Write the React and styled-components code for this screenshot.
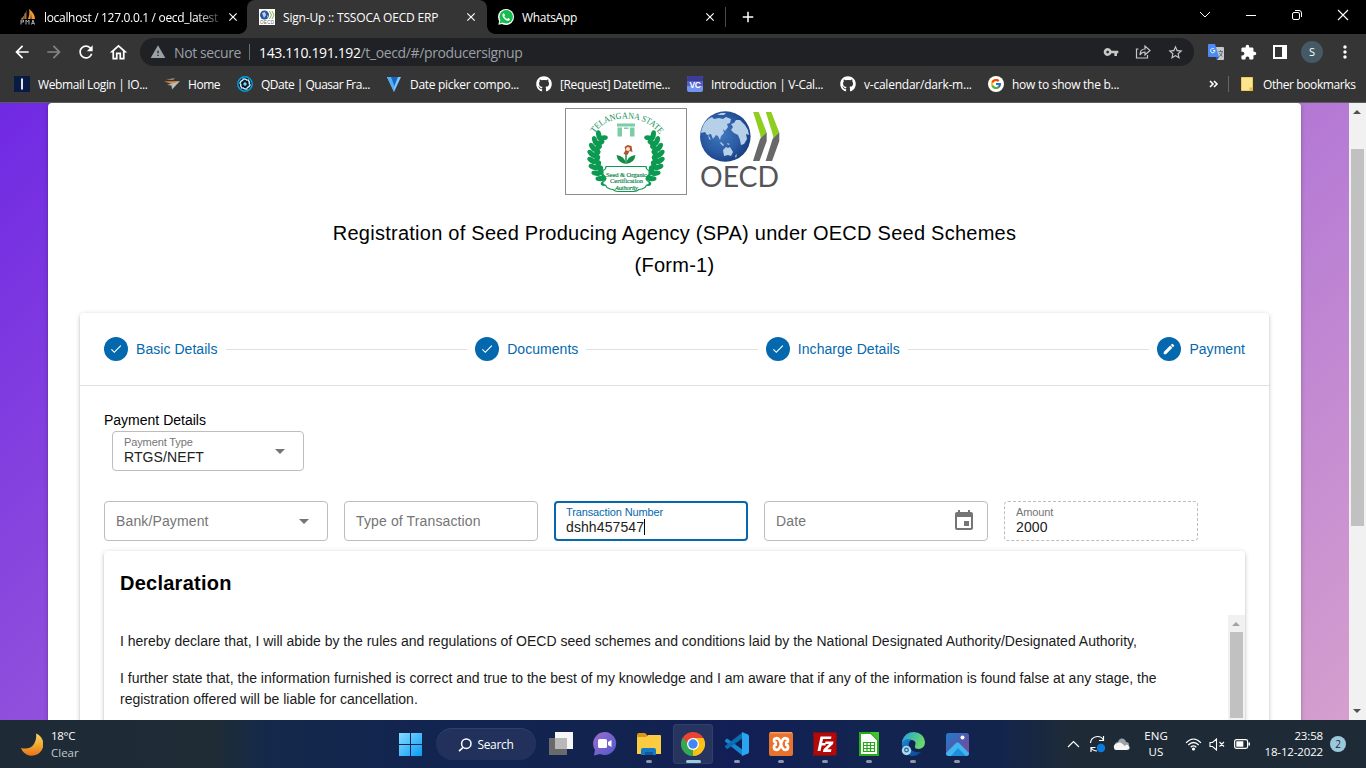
import React from "react";
import styled, { createGlobalStyle } from "styled-components";
import {
  MdArrowBack, MdArrowForward, MdRefresh, MdOutlineHome, MdWarning, MdVpnKey, MdStarBorder,
  MdExtension, MdMoreVert, MdCheck, MdEdit, MdArrowDropDown, MdEvent, MdClose, MdAdd,
} from "react-icons/md";
import { FaGithub } from "react-icons/fa";
import { FcGoogle } from "react-icons/fc";

const ui = '"Open Sans", "Noto Sans", sans-serif';
const body = '"Liberation Sans", Arial, sans-serif';
const blue = "#0468ae";

const Global = createGlobalStyle`
  * { box-sizing: border-box; }
  body { margin: 0; overflow: hidden; background: #000; font-family: ${body}; }
  svg { display: block; flex: none; }
`;

const Screen = styled.div`
  width: 1366px;
  height: 768px;
  display: flex;
  flex-direction: column;
  overflow: hidden;
`;

/* ---------- browser chrome ---------- */
const TabStrip = styled.div`
  height: 34px;
  flex: none;
  display: flex;
  background: #000;
  color: #fff;
  font: 12px ${ui};
`;
const Tab = styled.div`
  position: relative;
  width: ${(p) => p.$width}px;
  height: 34px;
  padding: 0 ${(p) => p.$right ?? 9}px 0 ${(p) => p.$left}px;
  display: flex;
  align-items: center;
  gap: 8px;
  background: ${(p) => (p.$active ? "#353535" : "transparent")};
  border-radius: 8px 8px 0 0;
  &::before, &::after {
    content: ${(p) => (p.$active ? '""' : "none")};
    position: absolute;
    bottom: 0;
    width: 8px;
    height: 8px;
  }
  &::before { left: -8px; background: radial-gradient(circle at 0 0, transparent 7.5px, #353535 8px); }
  &::after { right: -8px; background: radial-gradient(circle at 100% 0, transparent 7.5px, #353535 8px); }
`;
const TabTitle = styled.span`
  flex: 1;
  white-space: nowrap;
  letter-spacing: ${(p) => p.$spacing}px;
  ${(p) => p.$fade && "mask-image: linear-gradient(90deg, #000 88%, rgba(0,0,0,.25));"}
`;
const TabDivider = styled.i`
  width: 1px;
  height: 20px;
  margin: 7px 13px 0 0;
  background: #4a4a4a;
`;
const NewTab = styled.div`
  padding-top: 8px;
`;
const WindowButtons = styled.div`
  margin-left: auto;
  padding-right: 17px;
  height: 29px;
  display: flex;
  align-items: center;
  gap: 34px;
`;
const Toolbar = styled.div`
  height: 36px;
  flex: none;
  display: flex;
  align-items: center;
  background: #353535;
  color: #fff;
`;
const NavButtons = styled.div`
  width: 140px;
  padding-left: 12px;
  display: flex;
  gap: 12px;
`;
const Omnibox = styled.div`
  width: 1054px;
  height: 28px;
  padding: 0 10px;
  display: flex;
  align-items: center;
  border-radius: 14px;
  background: #202124;
  color: #9aa0a6;
  font: 14px ${ui};
`;
const NotSecure = styled.span`
  width: 75px;
  margin-left: 8px;
  white-space: nowrap;
  letter-spacing: -0.4px;
`;
const Bar = styled.i`
  width: 1px;
  height: 16px;
  margin-right: 9px;
  background: #6c6f73;
`;
const Url = styled.span`
  flex: 1;
  white-space: nowrap;
  letter-spacing: -0.37px;
  b { font-weight: 400; color: #fff; }
`;
const OmniActions = styled.div`
  display: flex;
  gap: 16px;
  color: #c7c7c7;
`;
const ToolActions = styled.div`
  display: flex;
  align-items: center;
  gap: 16px;
  padding-left: 14px;
`;
const Avatar = styled.div`
  width: 22px;
  height: 22px;
  margin: 0 -4px 0 -2px;
  border-radius: 50%;
  background: #455a64;
  color: #fff;
  font: 11px/21px ${ui};
  text-align: center;
`;
const Bookmarks = styled.div`
  height: 33px;
  flex: none;
  padding: 0 0 4px 14px;
  display: flex;
  align-items: center;
  background: #353535;
  border-bottom: 1px solid #5b5b5b;
  color: #fff;
  font: 12px ${ui};
`;
const Bookmark = styled.div`
  width: ${(p) => p.$width}px;
  flex: none;
  display: flex;
  align-items: center;
  gap: 8px;
  white-space: nowrap;
  letter-spacing: ${(p) => p.$spacing}px;
`;
const Overflow = styled.div`
  margin-left: auto;
  display: flex;
  align-items: center;
`;
const OverflowDivider = styled.i`
  width: 1px;
  height: 16px;
  margin: 0 12px 0 9px;
  background: #666;
`;
const OtherBookmarks = styled.span`
  width: 103px;
  margin-left: 10px;
  white-space: nowrap;
  letter-spacing: -0.4px;
`;

/* ---------- page ---------- */
const Viewport = styled.div`
  height: 617px;
  flex: none;
  display: flex;
  overflow: hidden;
`;
const Page = styled.main`
  width: 1349px;
  padding: 0 48px;
  background: linear-gradient(135deg, #7029e3, #d59fce);
`;
const Sheet = styled.section`
  height: 640px;
  padding: 5px 32px 0;
  background: #fff;
  border-radius: 4px 4px 0 0;
  box-shadow: 0 1px 5px rgba(0,0,0,.2), 0 2px 2px rgba(0,0,0,.14), 0 3px 1px -2px rgba(0,0,0,.12);
`;
const Logos = styled.div`
  height: 87px;
  padding-left: 485px;
  display: flex;
  gap: 13px;
`;
const Title = styled.h1`
  margin: 22px 0 32px;
  font: 400 20px/32px ${body};
  letter-spacing: 0.25px;
  text-align: center;
  color: #000;
`;
const Card = styled.div`
  background: #fff;
  border-radius: 4px;
  box-shadow: 0 1px 5px rgba(0,0,0,.2), 0 2px 2px rgba(0,0,0,.14), 0 3px 1px -2px rgba(0,0,0,.12);
`;
const Stepper = styled(Card)`
  height: 480px;
`;
const StepHeader = styled.div`
  height: 73px;
  padding: 0 24px;
  display: flex;
  align-items: center;
  gap: 8px;
  border-bottom: 1px solid #e0e0e0;
  color: ${blue};
  font-size: 14px;
  letter-spacing: 0.05px;
  white-space: nowrap;
`;
const Dot = styled.span`
  width: 24px;
  height: 24px;
  flex: none;
  display: grid;
  place-items: center;
  border-radius: 50%;
  background: ${blue};
  color: #fff;
`;
const StepLine = styled.i`
  flex: ${(p) => p.$grow} 1 0;
  height: 1px;
  background: #e0e0e0;
`;
const StepBody = styled.div`
  padding: 24px 24px 0;
`;
const Caption = styled.div`
  height: 21px;
  font-size: 14px;
  line-height: 21px;
`;
const Field = styled.div`
  width: ${(p) => p.$width}px;
  height: 40px;
  padding: 0 11px;
  display: flex;
  align-items: center;
  justify-content: space-between;
  border: ${(p) => (p.$focus ? `2px solid ${blue}` : `1px ${p.$readonly ? "dashed" : "solid"} #bdbdbd`)};
  ${(p) => p.$focus && "padding: 0 10px;"}
  border-radius: 4px;
  color: #757575;
  font-size: 14px;
  letter-spacing: 0.13px;
`;
const FieldText = styled.div`
  display: flex;
  flex-direction: column;
  small {
    font-size: 11px;
    line-height: 13px;
    letter-spacing: -0.12px;
    color: ${(p) => (p.$focus ? blue : "#757575")};
  }
  span { line-height: 17px; color: #212121; letter-spacing: 0.1px; }
`;
const Caret = styled.i`
  display: inline-block;
  width: 1px;
  height: 16px;
  vertical-align: -3px;
  background: #000;
`;
const TypeRow = styled.div`
  padding: 0 8px;
  height: 70px;
`;
const FieldRow = styled.div`
  display: flex;
  gap: 16px;
  margin-bottom: 10px;
`;
const Declaration = styled(Card)`
  height: 220px;
`;
const DeclTitle = styled.h2`
  margin: 0;
  height: 64px;
  padding: 16px;
  font: 700 20px/32px ${body};
  letter-spacing: 0.25px;
`;
const DeclScroll = styled.div`
  display: flex;
  justify-content: space-between;
  height: 105px;
`;
const DeclText = styled.div`
  width: 1090px;
  padding: 16px 0 0 16px;
  color: #1a1a1a;
  font-size: 14px;
  line-height: 21px;
  p { margin: 0 0 16px; }
`;
const ScrollTrack = styled.div`
  width: 17px;
  padding-top: ${(p) => p.$top}px;
  position: relative;
  background: #f1f1f1;
`;
const Thumb = styled.div`
  width: 13px;
  height: ${(p) => p.$height}px;
  margin: 0 2px;
  background: #c1c1c1;
`;
const ScrollArrow = styled.i`
  position: absolute;
  left: 4px;
  ${(p) => (p.$down ? "bottom: 7px" : "top: 7px")};
  border: 4px solid transparent;
  border-${(p) => (p.$down ? "top" : "bottom")}-color: ${(p) => p.$color};
  border-${(p) => (p.$down ? "bottom" : "top")}-width: 0;
`;

/* ---------- taskbar ---------- */
const Taskbar = styled.footer`
  height: 48px;
  flex: none;
  display: flex;
  align-items: center;
  background: linear-gradient(90deg, #1e2b37 0, #1f2c36 215px, #14294a 265px, #122450 420px, #12234f 620px, #121f56 730px, #122450 860px, #12244c 1000px, #1e2b37 1070px);
  color: #fff;
  font: 12px/16px ${ui};
`;
const Weather = styled.div`
  width: 376px;
  padding-left: 20px;
  display: flex;
  align-items: center;
  gap: 8px;
  font-size: 11.5px;
`;
const WeatherLine = styled.div`
  padding-top: 1px;
  letter-spacing: ${(p) => (p.$dim ? 0 : -0.3)}px;
  color: ${(p) => (p.$dim ? "#c3c9cf" : "#fff")};
`;
const WinButton = styled.div`
  width: 60px;
  padding-left: 23px;
`;
const SearchPill = styled.div`
  width: 100px;
  height: 32px;
  margin-right: 3px;
  padding-top: 1px;
  display: flex;
  align-items: center;
  justify-content: center;
  gap: 5px;
  border-radius: 16px;
  background: #22315b;
  box-shadow: inset 0 1px #30406a;
  letter-spacing: -0.3px;
`;
const TaskApp = styled.div`
  position: relative;
  width: 44px;
  height: 48px;
  display: grid;
  place-items: center;
  &::before {
    content: ${(p) => (p.$active ? '""' : "none")};
    position: absolute;
    inset: 4px 2px 4px 2px;
    border-radius: 4px;
    background: #27345f;
    box-shadow: inset 0 0 0 1px #323f67;
  }
  &::after {
    content: ${(p) => (p.$running ? '""' : "none")};
    position: absolute;
    bottom: 5px;
    width: ${(p) => (p.$active ? 15 : 6)}px;
    height: 3px;
    border-radius: 2px;
    background: ${(p) => (p.$active ? "#9ccadd" : "#9094ab")};
  }
  svg { position: relative; }
`;
const Tray = styled.div`
  margin-left: auto;
  padding-right: 20px;
  display: flex;
  align-items: center;
`;
const TrayIcon = styled.span`
  margin-right: ${(p) => p.$gap}px;
`;
const TrayText = styled.div`
  width: ${(p) => p.$width}px;
  margin-right: ${(p) => p.$gap}px;
  text-align: ${(p) => p.$align};
  font-size: 11.5px;
  letter-spacing: ${(p) => p.$spacing}px;
  white-space: nowrap;
`;
const Badge = styled.span`
  width: 16px;
  height: 16px;
  border-radius: 50%;
  background: #9cc8dc;
  color: #1b2a35;
  font: 10px/16px ${ui};
  text-align: center;
`;

/* ---------- drawings ---------- */
const Svg = ({ w = 16, h = w, children }) => (
  <svg width={w} height={h} viewBox={`0 0 ${w} ${h}`} fill="none">{children}</svg>
);

const PmaIcon = () => (
  <Svg>
    <path d="M6.500 1c-1 4-3 7-6 9h6z" fill="#a9743a" />
    <path d="M9 0c4 3 6 6 6 10H8c1-3 2-6 1-10z" fill="#f39a2d" />
    <path d="M5 3v7H3zM11 4l1 6h-2z" fill="#7d5a35" />
    <path d="M1 15.500V11h2.500v2H1m5 2.500V11l1.500 2L9 11v4.500m2.500 0L13 11l1.500 4.500m-2.500-1h2" stroke="#a5a8af" />
  </Svg>
);
const OecdLogo = () => (
  <svg width="80" height="87" viewBox="0 0 80 87">
    <defs>
      <radialGradient id="globe" cx=".42" cy=".45" r=".62">
        <stop offset="0" stopColor="#3f78bd" />
        <stop offset=".6" stopColor="#2a5aa3" />
        <stop offset="1" stopColor="#173b7d" />
      </radialGradient>
    </defs>
    <circle cx="25.300" cy="28.500" r="25.300" fill="url(#globe)" />
    <g fill="#b7d0ea">
      <path d="M1.500 22Q4 12 12 9l2 2 5-1 4 1 3-2 5 2-1 4-3 1 1 3-3 4-2-2 1 4-3 3-1 4-2-4-2-1-3 4-2-5-4 1-2-3-4 1z" />
      <path d="m36 12 4 0q5 4 8 10l1 5-3-1 1 5-3 5-3 1-1-5-2-5-4-2-3-3 2-3-2-3 3-1z" />
      <path d="m21 34 3 3-1 1-3-3zM27 35l3 1-2 1zM23 42l3-3 2 1 2-1 3 5-2 4-3-1-4 1zM35 48l2-2-1 4zM8 26l3 6-2-1zM17 7l4-2 5 0-2 2z" />
    </g>
    <path d="M53.200 4h5.500l8 20.500-5.200 9.500-1.500-8zM65.800 4h5.500l8 20.500-5.200 9.500-1.500-8z" fill="#8fce1e" />
    <path d="M66.700 24.500v8.500L59.500 53h-6.500l7-22zM79.300 24.500v8.500L72.100 53h-6.500l7-22z" fill="#68686a" />
    <text x="0" y="79" fontFamily="Lato" fontSize="28.500" fill="#545458" textLength="79" lengthAdjust="spacingAndGlyphs">OECD</text>
  </svg>
);
const OecdFavicon = () => (
  <Svg>
    <path fill="#fff" d="M0 0h16v16H0z" />
    <circle cx="5.500" cy="6" r="4.500" fill="#2b559b" />
    <path d="m3 4 3-1 1 3-2 3zm5 2 1 1-1 2z" fill="#bcd3ee" />
    <path d="m10.500 2 2 4-2 4m2.500-8 2 4-2 4" stroke="#84b84a" />
    <text x="1" y="15" fontSize="4.500" fontFamily="Liberation Sans" fill="#666" textLength="14">OECD</text>
  </Svg>
);
const leaves = Array.from({ length: 9 }, (_, i) => {
  const a = ((122 + i * 11.5) * Math.PI) / 180;
  return { x: 61 + 32 * Math.cos(a), y: 48 + 31 * Math.sin(a), d: (a * 180) / Math.PI };
});
const Laurel = () => (
  <g fill="#0c9a52">
    {leaves.map(({ x, y, d }) => (
      <g key={d} transform={`translate(${x} ${y}) rotate(${d})`}>
        <ellipse cx="3.500" cy="0" rx="5" ry="2.600" transform="rotate(45)" />
        <ellipse cx="-3.500" cy="0" rx="5" ry="2.600" transform="rotate(-45)" />
      </g>
    ))}
  </g>
);
const StateEmblem = () => (
  <svg width="122" height="87" viewBox="0 0 122 87">
    <rect x=".5" y=".5" width="121" height="86" fill="#fff" stroke="#8c8c8c" />
    <path id="arch" d="M29.500 25.500Q40 10.500 61 10.500T94 25.500" fill="none" />
    <text fontFamily="Liberation Serif" fontSize="9" fill="#138f59">
      <textPath href="#arch" textLength="75" lengthAdjust="spacingAndGlyphs">TELANGANA STATE</textPath>
    </text>
    <Laurel />
    <g transform="translate(122 0) scale(-1 1)"><Laurel /></g>
    <path d="M52 15.500h18v3H52zM52.500 19.500H57v9h-4.500zm12.500 0h4.500v9H65zM59 19.500h4.500V21H59z" fill="#7bcda8" />
    <path d="M61 55V43" stroke="#16904e" strokeWidth="1.500" />
    <path d="M61 56q-1-8-9.500-9 1 8 9.500 9zm0 0q1-8 9.500-9-1 8-9.500 9z" fill="#138c45" />
    <path d="m58.500 46 2-4-1-3 3-2 4 1 1 6-3-1-2 4z" fill="#b3532d" />
    <circle cx="63" cy="41" r="2" fill="#f6e2d6" />
    <path d="M41 58.500h40q0 3 3 4v4q-3 2-3 4t3 3v3q-3 0-4 3-3 2-6 2-2 2-5 2H53q-3 0-5-2-3 0-6-2-1-3-4-3v-3q3-1 3-3t-3-4v-4q3-1 3-4z" fill="#fff" stroke="#0c9a52" strokeWidth="1.100" />
    <g fontFamily="Liberation Serif" fontSize="6.500" fill="#158a50" textAnchor="middle" stroke="#158a50" strokeWidth=".2">
      <text x="61.500" y="68.500" textLength="41">Seed &amp; Organic</text>
      <text x="61.500" y="75" textLength="33">Certification</text>
      <text x="61.500" y="81.500" textLength="23" fontStyle="italic">Authority</text>
    </g>
  </svg>
);
const ShareIcon = () => (
  <Svg><path d="M3.500 5H1.500v9h11v-3M5 11c0-4 2-6 5-6V2l5 4.500L10 11V8c-2 0-4 1-5 3z" stroke="#c7c7c7" strokeWidth="1.200" /></Svg>
);
const TranslateIcon = () => (
  <Svg>
    <path d="M6 3h9q1 0 1 1v11q0 1-1 1H9z" fill="#c6c8ca" />
    <path d="M0 1q0-1 1-1h6l4 13H1q-1 0-1-1z" fill="#4c8bf5" />
    <path d="m8 13 3 0-2 3z" fill="#1a56c4" />
    <path d="M7 6.500A2.200 2.200 0 1 1 6.300 5M5 6.600h2" stroke="#fff" />
    <path d="M10.500 7.500H15M12.500 6v1.500m-1.500 5q3-1 3.300-5m-3 1.500 3 3.500" stroke="#58707c" strokeWidth=".9" />
  </Svg>
);
const QuasarIcon = () => (
  <Svg>
    <circle cx="8" cy="8" r="7.200" fill="#071b2a" stroke="#00a4e8" strokeWidth="1.400" />
    {[0, 60, 120, 180, 240, 300].map((a) => (
      <path key={a} d="M5.500 3.300Q8.500 2.500 10.500 4.500" stroke="#cfeefc" strokeWidth="1.500" transform={`rotate(${a} 8 8)`} />
    ))}
    <circle cx="8" cy="8" r="1.700" fill="#7fd4f7" />
  </Svg>
);
const HomePlane = () => (
  <Svg>
    <path d="m2 3.500 9-1.500-2 2z" fill="#9a8f85" /><path d="M0 5.500 16 5l-8 3z" fill="#e28a35" /><path d="m3 9 13-4-8 8.500-.5-4z" fill="#b9bcc0" />
  </Svg>
);
const VuetifyIcon = () => (
  <Svg><path d="M1 1h4l3 8v7zM11 1h4L8 16V9z" fill="#7bc6ff" /><path d="M4 1h8L8 11z" fill="#1867c0" /><path d="M1 1h4l3 8v7z" fill="#4fb0f7" /></Svg>
);
const VcIcon = () => (
  <Svg>
    <rect width="16" height="16" rx="2" fill="#7394f0" /><path d="M0 2q0-2 2-2h12q2 0 2 2v3H0z" fill="#3d3c99" /><path d="M0 5h16v5H0z" fill="#5360c9" />
    <text x="8" y="12" fontSize="8.500" fontWeight="700" fontFamily="Liberation Sans" textAnchor="middle" fill="#fff">VC</text>
  </Svg>
);
const WebmailIcon = () => (<Svg><path d="M0 0h16v16H0z" fill="#081b43" /><path d="M8 2.500v11" stroke="#dfe5f2" strokeWidth="2" /></Svg>);
const FolderMark = () => (<Svg w={12} h={14}><path d="M.5.5h11v13H.500z" fill="#ffe48f" stroke="#eecb55" /><path d="M8.500 10.500h3v3h-3z" fill="#e5b93c" /></Svg>);
const PanelIcon = () => (<Svg w={14}><path d="M1 1h12v12H1z" stroke="#fff" strokeWidth="2" /><path d="M9 0h5v14H9z" fill="#fff" /></Svg>);
const WhatsIcon = () => (
  <Svg><circle cx="8" cy="8" r="8" fill="#fff" /><path d="m.3 15.700 1.200-5 4 4z" fill="#fff" /><circle cx="8.200" cy="7.800" r="6.800" fill="#16bd4d" /><path d="m1.500 14.500.8-3.500 2.500 2.500z" fill="#16bd4d" /><path d="M4.800 4.700q1-1 1.700.2l.6 1.300-.8 1q1 2 2.800 2.700l1-.9 1.700.9q.5 1-.8 1.700-1.600.8-4.300-1.400-3.200-3-1.900-5.500z" fill="#fff" /></Svg>
);

const Moon = () => (
  <Svg w={23} h={23}>
    <defs><linearGradient id="moon" x1="0" y1="0" x2="0" y2="1"><stop stopColor="#f8d56a" /><stop offset=".5" stopColor="#f2ab31" /><stop offset="1" stopColor="#e9711c" /></linearGradient></defs>
    <path d="M16 0.500a11.500 11.500 0 1 1-15 14.500Q10 17 14 11q3-5 2-10.500z" fill="url(#moon)" />
  </Svg>
);
const WinLogo = () => (
  <Svg w={23}>
    <defs><linearGradient id="win" x1="0" y1="0" x2="1" y2="1"><stop stopColor="#86dcff" /><stop offset="1" stopColor="#0a9bf5" /></linearGradient></defs>
    <path d="M0 0h11v11H0zM12 0h11v11H12zM0 12h11v11H0zM12 12h11v11H12z" fill="url(#win)" />
  </Svg>
);
const TaskViewIcon = () => (
  <Svg w={24}><path d="M0 6h18v17H0z" fill="#6a6a6a" /><path d="M6 0h18v17H6z" fill="#f6f6f6" /><path d="M6 6h12v11H6z" fill="#b8b8b8" /></Svg>
);
const ChatIcon = () => (
  <Svg w={24}>
    <defs><linearGradient id="chat" x2="1" y2="1"><stop stopColor="#9c6cd0" /><stop offset="1" stopColor="#5059c9" /></linearGradient></defs>
    <path d="M12 0a11.500 11.500 0 1 1-5 22L1 23.500 2 18A11.700 11.700 0 0 1 12 0z" fill="url(#chat)" />
    <rect x="5" y="7" width="9" height="9" rx="1.500" fill="#fff" /><path d="m15 10 3.500-2v7L15 13z" fill="#fff" />
  </Svg>
);
const FilesIcon = () => (
  <Svg w={24}>
    <path d="M0 3q0-2 2-2h6l2 2v4H0z" fill="#d99a12" />
    <path d="M0 5h9l2-2h12q1 0 1 1v18H0z" fill="#fbcb42" />
    <path d="M4 23v-5q0-2 2-2h11q2 0 2 2v5z" fill="#1579c8" /><path d="M8 20h8v3H8z" fill="#105a9b" />
  </Svg>
);
const ChromeIcon = () => (
  <Svg w={24}>
    <path d="M12 12 22.400 6A12 12 0 0 1 12 24z" fill="#fbc116" />
    <path d="M12 12v12A12 12 0 0 1 1.600 6z" fill="#34a853" />
    <path d="M12 6h10.400L17.200 15l-5.200 9z" fill="#fbc116" />
    <path d="M6.800 15 1.600 6 12 12l5.200 3-5.200 9z" fill="#34a853" />
    <path d="M12 12h5.200v3L12 24z" fill="#fbc116" />
    <path d="M6.800 9 1.600 6a12 12 0 0 1 20.800 0H12L9 12z" fill="#ea4335" />
    <path d="M1.600 6 9 13V6z" fill="#ea4335" />
    <path d="M1.600 6 6.800 15 8 20 1 14z" fill="#34a853" />
    <circle cx="12" cy="12" r="6" fill="#fff" /><circle cx="12" cy="12" r="4.700" fill="#4285f4" />
  </Svg>
);
const CodeIcon = () => (
  <Svg w={24}>
    <path d="m0 8 2.200-1.600L18 18v6L0 9.500z" fill="#1687d0" />
    <path d="m0 15 2.200 2.300L18 6V0L0 14z" fill="#0a6db0" />
    <path d="m17 0 6 2.500q1 .5 1 1.500v16q0 1-1 1.500L17 24z" fill="#2ba5f0" />
  </Svg>
);
const XamppIcon = () => (
  <Svg w={24}>
    <rect width="24" height="24" rx="2" fill="#e8732c" />
    <path d="M1 .8h22" stroke="#f5b183" />
    <path d="M8 11Q5 10.500 5 8.500T8 6.200Q10.500 6.200 12 12t4 5.800q3 0 3-2.600T16 12.500M16 11q3-.5 3-2.500t-3-2.300q-2.500 0-4 5.800t-4 5.800q-3 0-3-2.600t3-2.700" stroke="#fff" strokeWidth="2.700" />
  </Svg>
);
const FilezillaIcon = () => (
  <Svg w={24}>
    <rect x="1" y="1" width="22" height="22" fill="#b50808" stroke="#ab0808" strokeWidth="2" strokeDasharray="1.500 1" />
    <path d="M4.500 19 7.500 4.500h11L18 7h-8l-.8 4H13l-.6 2.500H8.700L7.500 19zM12.500 9.500h8L20 12l-5.500 5.300h4l-.6 2.700h-8l.6-2.700 5.500-5.200H12z" fill="#fff" />
  </Svg>
);
const CalcIcon = () => (
  <Svg w={20} h={24}>
    <path d="M1 1h11l7 7v15H1z" fill="#fff" stroke="#23b014" strokeWidth="2" /><path d="M11 0h9v9z" fill="#43c330" />
    <path d="M4.500 10.500h11v9h-11zm0 3h11m-11 3h11m-7.500-6v9m3.500-9v9" stroke="#2aa51b" strokeWidth="1.200" />
  </Svg>
);
const EdgeIcon = () => (
  <Svg w={24}>
    <defs>
      <linearGradient id="edge1" x2="1" y2=".4"><stop stopColor="#209ee0" /><stop offset="1" stopColor="#6ad86a" /></linearGradient>
      <linearGradient id="edge2" y2="1"><stop stopColor="#1b88d8" /><stop offset="1" stopColor="#0d3f8c" /></linearGradient>
    </defs>
    <path d="M1 9Q4 0 13 0q10 1 11 10 0 6-6 7-5 0-4-3 2-5-3-6-6-1-10 4z" fill="url(#edge1)" />
    <path d="M1 10q5-5 9-2-3 2-2 7 2 6 12 5-4 5-10 4Q0 21 1 10z" fill="url(#edge2)" />
    <circle cx="5.500" cy="18.500" r="4.700" fill="#a9d9f2" /><circle cx="5.500" cy="18" r="1.800" stroke="#276592" strokeWidth="1.200" />
  </Svg>
);
const PhotosIcon = () => (
  <Svg w={23} h={24}>
    <defs><linearGradient id="ph" x1="0" x2="1" y2="1"><stop stopColor="#1e7ccf" /><stop offset=".6" stopColor="#5b55a8" /><stop offset="1" stopColor="#7e4b9b" /></linearGradient></defs>
    <rect y="1" width="23" height="23" rx="2.500" fill="url(#ph)" />
    <path d="M0 21 10 11q1.500-1.500 3 0l10 10q0 3-3 3H3q-3 0-3-3z" fill="#3fb6f0" /><path d="m5 24 7-8 8 8z" fill="#1f8fdb" />
    <circle cx="16.500" cy="5.500" r="2" fill="#fff" />
  </Svg>
);
const SearchIcon = () => (<Svg w={14} h={14}><circle cx="8.300" cy="5.700" r="4.700" stroke="#fff" strokeWidth="1.500" /><path d="M5 9.500 1 13.200" stroke="#fff" strokeWidth="1.700" /></Svg>);
const SyncIcon = () => (
  <Svg w={17} h={18}><path d="M1.500 8a7 7 0 0 1 13-3M14.500 1v4.500H10M2 17v-4.500h4.500M2 12.500Q4 16 8 16" stroke="#fff" strokeWidth="1.200" /><circle cx="12" cy="13" r="4.200" fill="#0a7ce0" /></Svg>
);
const CloudIcon = () => (
  <Svg w={17} h={12}><path d="M2 7q0-3 3-3Q6 0 9.500.5 12.500 1 13 4q3 0 3 3z" fill="#9ba1a7" /><path d="M1 10q-1-4 3-4.500Q7 3.500 9.500 6l2 1.500q4-2 5 1.500.5 3-3 3H3q-2 0-2-2z" fill="#f5f5f5" /></Svg>
);
const WifiIcon = () => (
  <Svg w={17} h={13}><path d="M1 4.800Q8.500-2.800 16 4.800M3.300 7q5.200-5 10.400 0M5.700 9.200q2.800-2.500 5.600 0" stroke="#fff" strokeWidth="1.200" /><circle cx="8.500" cy="11" r="1.600" fill="#fff" /></Svg>
);
const MuteIcon = () => (<Svg w={16} h={13}><path d="M1 4.500h2.500L7.500 1v11L3.500 8.500H1zM10.500 4l4.500 4.500M15 4l-4.500 4.500" stroke="#fff" strokeWidth="1.100" /></Svg>);
const BatteryIcon = () => (<Svg w={16} h={10}><rect x=".6" y=".6" width="13" height="8.800" rx="1.800" stroke="#fff" strokeWidth="1.200" /><path d="M2.300 2.300h7v5.400h-7zM14.500 3.500H16v3h-1.500z" fill="#fff" /></Svg>);

/* ---------- data ---------- */
const bookmarks = [
  { icon: <WebmailIcon />, text: "Webmail Login | IO...", width: 150, spacing: -0.38 },
  { icon: <HomePlane />, text: "Home", width: 73, spacing: -0.45 },
  { icon: <QuasarIcon />, text: "QDate | Quasar Fra...", width: 149, spacing: -0.51 },
  { icon: <VuetifyIcon />, text: "Date picker compo...", width: 150, spacing: -0.29 },
  { icon: <FaGithub size={16} />, text: "[Request] Datetime...", width: 151, spacing: -0.36 },
  { icon: <VcIcon />, text: "Introduction | V-Cal...", width: 153, spacing: -0.34 },
  { icon: <FaGithub size={16} />, text: "v-calendar/dark-m...", width: 148, spacing: -0.23 },
  { icon: <Svg><circle cx="8" cy="8" r="8" fill="#fff" /><g transform="translate(2 2)"><FcGoogle size={12} /></g></Svg>, text: "how to show the b...", width: 140, spacing: -0.27 },
];
const steps = [
  { label: "Basic Details", line: 241 },
  { label: "Documents", line: 171 },
  { label: "Incharge Details", line: 241 },
  { label: "Payment" },
];
const apps = [
  { name: "taskview", icon: <TaskViewIcon /> },
  { name: "chat", icon: <ChatIcon /> },
  { name: "files", icon: <FilesIcon />, running: true },
  { name: "chrome", icon: <ChromeIcon />, running: true, active: true },
  { name: "code", icon: <CodeIcon />, running: true },
  { name: "xampp", icon: <XamppIcon />, running: true },
  { name: "filezilla", icon: <FilezillaIcon />, running: true },
  { name: "calc", icon: <CalcIcon />, running: true },
  { name: "edge", icon: <EdgeIcon />, running: true },
  { name: "photos", icon: <PhotosIcon />, running: true },
];

export default function App() {
  return (
    <Screen>
      <Global />
      <TabStrip>
        <Tab $width={247} $left={20} $right={8}>
          <PmaIcon />
          <TabTitle $fade $spacing={-0.32}>localhost / 127.0.0.1 / oecd_latest</TabTitle>
          <MdClose size={14} />
        </Tab>
        <Tab $active $width={240} $left={12}>
          <OecdFavicon />
          <TabTitle $spacing={-0.18}>Sign-Up :: TSSOCA OECD ERP</TabTitle>
          <MdClose size={14} />
        </Tab>
        <Tab $width={238} $left={11} $right={8}>
          <WhatsIcon />
          <TabTitle $spacing={-0.3}>WhatsApp</TabTitle>
          <MdClose size={14} />
        </Tab>
        <TabDivider />
        <NewTab><MdAdd size={18} /></NewTab>
        <WindowButtons>
          <Svg w={12} h={8}><path d="m1 1 5 5 5-5" stroke="#fff" /></Svg>
          <Svg w={12} h={8}><path d="M1 4.500h10" stroke="#fff" /></Svg>
          <Svg w={12} h={12}><rect x="1.500" y="3.500" width="7" height="7" rx="1.500" stroke="#fff" /><path d="M4 1.500h4q2.500 0 2.500 2.500v4" stroke="#fff" /></Svg>
          <Svg w={12} h={12}><path d="m1 1 10 10M11 1 1 11" stroke="#fff" strokeWidth="1.100" /></Svg>
        </WindowButtons>
      </TabStrip>
      <Toolbar>
        <NavButtons>
          <MdArrowBack size={20} />
          <MdArrowForward size={20} color="#858585" />
          <MdRefresh size={20} />
          <MdOutlineHome size={21} />
        </NavButtons>
        <Omnibox>
          <MdWarning size={16} />
          <NotSecure>Not secure</NotSecure>
          <Bar />
          <Url><b>143.110.191.192</b>/t_oecd/#/producersignup</Url>
          <OmniActions><MdVpnKey size={16} /><ShareIcon /><MdStarBorder size={17} /></OmniActions>
        </Omnibox>
        <ToolActions>
          <TranslateIcon />
          <MdExtension size={17} />
          <PanelIcon />
          <Avatar>S</Avatar>
          <MdMoreVert size={20} />
        </ToolActions>
      </Toolbar>
      <Bookmarks>
        {bookmarks.map((b) => (
          <Bookmark key={b.text} $width={b.width} $spacing={b.spacing}>{b.icon}{b.text}</Bookmark>
        ))}
        <Overflow>
          <Svg w={10} h={8}><path d="m1 1 3 3-3 3m4-6 3 3-3 3" stroke="#fff" strokeWidth="1.600" /></Svg>
          <OverflowDivider />
          <FolderMark />
          <OtherBookmarks>Other bookmarks</OtherBookmarks>
        </Overflow>
      </Bookmarks>

      <Viewport>
        <Page>
          <Sheet>
            <Logos><StateEmblem /><OecdLogo /></Logos>
            <Title>Registration of Seed Producing Agency (SPA) under OECD Seed Schemes<br />(Form-1)</Title>
            <Stepper>
              <StepHeader>
                {steps.map((s) => (
                  <React.Fragment key={s.label}>
                    <Dot>{s.line ? <MdCheck size={14} /> : <MdEdit size={14} />}</Dot>
                    {s.label}
                    {s.line && <StepLine $grow={s.line} />}
                  </React.Fragment>
                ))}
              </StepHeader>
              <StepBody>
                <Caption>Payment Details</Caption>
                <TypeRow>
                  <Field $width={192}>
                    <FieldText><small>Payment Type</small><span>RTGS/NEFT</span></FieldText>
                    <MdArrowDropDown size={24} />
                  </Field>
                </TypeRow>
                <FieldRow>
                  <Field $width={224}>Bank/Payment<MdArrowDropDown size={24} /></Field>
                  <Field $width={194}>Type of Transaction</Field>
                  <Field $width={194} $focus>
                    <FieldText $focus><small>Transaction Number</small><span>dshh457547<Caret /></span></FieldText>
                  </Field>
                  <Field $width={224}>Date<MdEvent size={24} /></Field>
                  <Field $width={194} $readonly>
                    <FieldText><small>Amount</small><span>2000</span></FieldText>
                  </Field>
                </FieldRow>
                <Declaration>
                  <DeclTitle>Declaration</DeclTitle>
                  <DeclScroll>
                    <DeclText>
                      <p>I hereby declare that, I will abide by the rules and regulations of OECD seed schemes and conditions laid by the National Designated Authority/Designated Authority,</p>
                      <p>I further state that, the information furnished is correct and true to the best of my knowledge and I am aware that if any of the information is found false at any stage, the registration offered will be liable for cancellation.</p>
                    </DeclText>
                    <ScrollTrack $top={17}>
                      <ScrollArrow $color="#a3a3a3" />
                      <Thumb $height={86} />
                    </ScrollTrack>
                  </DeclScroll>
                </Declaration>
              </StepBody>
            </Stepper>
          </Sheet>
        </Page>
        <ScrollTrack $top={46}>
          <ScrollArrow $color="#505050" />
          <Thumb $height={377} />
          <ScrollArrow $down $color="#505050" />
        </ScrollTrack>
      </Viewport>

      <Taskbar>
        <Weather>
          <Moon />
          <div><WeatherLine>18°C</WeatherLine><WeatherLine $dim>Clear</WeatherLine></div>
        </Weather>
        <WinButton><WinLogo /></WinButton>
        <SearchPill><SearchIcon />Search</SearchPill>
        {apps.map((a) => (
          <TaskApp key={a.name} $running={a.running} $active={a.active}>{a.icon}</TaskApp>
        ))}
        <Tray>
          <TrayIcon $gap={9}><Svg w={13} h={8}><path d="m1 7 5.500-5.500L12 7" stroke="#fff" strokeWidth="1.200" /></Svg></TrayIcon>
          <TrayIcon $gap={7}><SyncIcon /></TrayIcon>
          <TrayIcon $gap={10}><CloudIcon /></TrayIcon>
          <TrayText $width={32} $gap={13} $align="center" $spacing={0.1}>ENG<br />US</TrayText>
          <TrayIcon $gap={7}><WifiIcon /></TrayIcon>
          <TrayIcon $gap={9}><MuteIcon /></TrayIcon>
          <TrayIcon $gap={14}><BatteryIcon /></TrayIcon>
          <TrayText $width={59} $gap={7} $align="right" $spacing={-0.15}>23:58<br />18-12-2022</TrayText>
          <Badge>2</Badge>
        </Tray>
      </Taskbar>
    </Screen>
  );
}
